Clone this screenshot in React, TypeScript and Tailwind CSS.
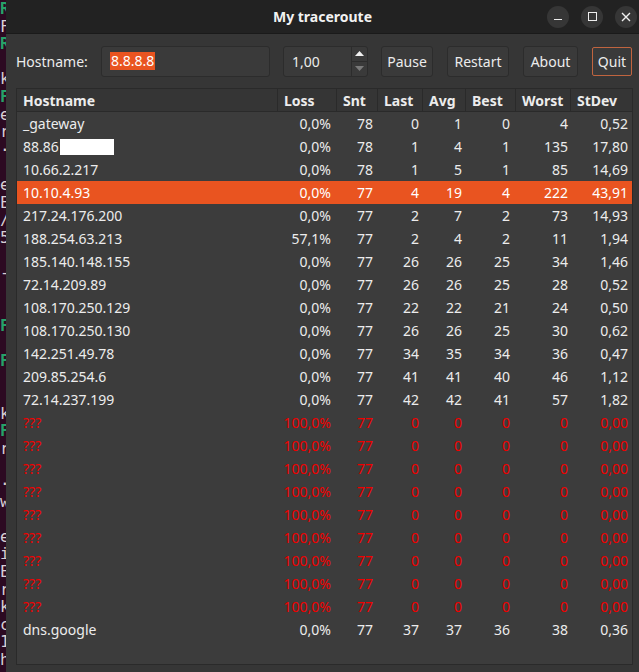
import React from "react";

type Row = { host: string; loss: string; snt: string; last: string; avg: string; best: string; worst: string; stdev: string; kind?: "sel" | "red"; mask?: boolean };

const rows: Row[] = [
  { host: "_gateway", loss: "0,0%", snt: "78", last: "0", avg: "1", best: "0", worst: "4", stdev: "0,52" },
  { host: "88.86", loss: "0,0%", snt: "78", last: "1", avg: "4", best: "1", worst: "135", stdev: "17,80", mask: true },
  { host: "10.66.2.217", loss: "0,0%", snt: "78", last: "1", avg: "5", best: "1", worst: "85", stdev: "14,69" },
  { host: "10.10.4.93", loss: "0,0%", snt: "77", last: "4", avg: "19", best: "4", worst: "222", stdev: "43,91", kind: "sel" },
  { host: "217.24.176.200", loss: "0,0%", snt: "77", last: "2", avg: "7", best: "2", worst: "73", stdev: "14,93" },
  { host: "188.254.63.213", loss: "57,1%", snt: "77", last: "2", avg: "4", best: "2", worst: "11", stdev: "1,94" },
  { host: "185.140.148.155", loss: "0,0%", snt: "77", last: "26", avg: "26", best: "25", worst: "34", stdev: "1,46" },
  { host: "72.14.209.89", loss: "0,0%", snt: "77", last: "26", avg: "26", best: "25", worst: "28", stdev: "0,52" },
  { host: "108.170.250.129", loss: "0,0%", snt: "77", last: "22", avg: "22", best: "21", worst: "24", stdev: "0,50" },
  { host: "108.170.250.130", loss: "0,0%", snt: "77", last: "26", avg: "26", best: "25", worst: "30", stdev: "0,62" },
  { host: "142.251.49.78", loss: "0,0%", snt: "77", last: "34", avg: "35", best: "34", worst: "36", stdev: "0,47" },
  { host: "209.85.254.6", loss: "0,0%", snt: "77", last: "41", avg: "41", best: "40", worst: "46", stdev: "1,12" },
  { host: "72.14.237.199", loss: "0,0%", snt: "77", last: "42", avg: "42", best: "41", worst: "57", stdev: "1,82" },
  ...Array.from({ length: 9 }, () => ({ host: "???", loss: "100,0%", snt: "77", last: "0", avg: "0", best: "0", worst: "0", stdev: "0,00", kind: "red" as const })),
  { host: "dns.google", loss: "0,0%", snt: "77", last: "37", avg: "37", best: "36", worst: "38", stdev: "0,36" },
];

const termLines: { c: string; g?: boolean }[] = [
  { c: "R", g: true }, { c: "F" }, { c: "R", g: true }, { c: "" }, { c: "k" }, { c: "F", g: true }, { c: "e" }, { c: "r" },
  { c: "·" }, { c: "" }, { c: "e" }, { c: "E" }, { c: "/" }, { c: "5" }, { c: "" }, { c: "-" }, { c: "" }, { c: "" }, { c: "F", g: true },
  { c: "" }, { c: "F", g: true }, { c: "" }, { c: "" }, { c: "k" }, { c: "F", g: true }, { c: "r" }, { c: "" }, { c: "·" }, { c: "w" },
  { c: "" }, { c: "e" }, { c: "i" }, { c: "E" }, { c: "r" }, { c: "k" }, { c: "c" }, { c: "1" }, { c: "h" },
];

const grid = "grid grid-cols-[261px_59px_41px_45px_43px_50px_55px_62px]";

export default function App() {
  const font = { fontFamily: '"Noto Sans", "DejaVu Sans", sans-serif' };
  return (
    <div className="flex w-[639px] h-[672px] overflow-hidden bg-[#2c0a22]" style={font}>
      <div className="w-[6px] shrink-0 overflow-hidden text-[16px] leading-[17.6px] text-[#d8d0d4]" style={{ fontFamily: '"DejaVu Sans Mono", monospace' }}>
        {termLines.map((l, i) => (
          <div key={i} className={l.g ? "text-[#26a269] font-bold" : ""}>{l.c || "\u00a0"}</div>
        ))}
      </div>
      <div className="flex-1 flex flex-col bg-[#363636] min-w-0">
        <div className="h-[34px] shrink-0 bg-[#222222] border-b border-[#1a1a1a] flex items-center relative">
          <div className="absolute left-0 right-0 text-center text-[14px] font-bold text-[#f2f2f2]">My traceroute</div>
          <div className="ml-auto mr-[2px] flex gap-[12px] items-center">
            <div className="w-[22px] h-[22px] rounded-full bg-[#363636] flex items-center justify-center">
              <div className="w-[8px] h-[1.5px] bg-[#eeeeee] mt-[6px]" />
            </div>
            <div className="w-[22px] h-[22px] rounded-full bg-[#363636] flex items-center justify-center">
              <div className="w-[9px] h-[9px] border-[1.5px] border-[#eeeeee]" />
            </div>
            <div className="w-[22px] h-[22px] rounded-full bg-[#363636] flex items-center justify-center">
              <svg width="10" height="10" viewBox="0 0 10 10"><path d="M1 1L9 9M9 1L1 9" stroke="#eeeeee" strokeWidth="1.4" /></svg>
            </div>
          </div>
        </div>
        <div className="flex items-center h-[32px] mt-[11px] ml-[10px] text-[14px] text-[#ececec]">
          <span className="w-[85px]">Hostname:</span>
          <div className="w-[169px] h-[31px] rounded-[3px] bg-[#3a3a3a] border border-[#2c2c2c] flex items-center pl-[8px]">
            <span className="bg-[#e95420] text-white px-[1px] leading-[18px]">8.8.8.8</span>
          </div>
          <div className="ml-[13px] w-[85px] h-[31px] rounded-[3px] bg-[#3a3a3a] border border-[#2c2c2c] flex">
            <div className="flex-1 flex items-center pl-[8px]">1,00</div>
            <div className="w-[16px] flex flex-col border-l border-[#2c2c2c]">
              <div className="flex-1 flex items-center justify-center border-b border-[#2c2c2c]">
                <svg width="9" height="5" viewBox="0 0 9 5"><path d="M0 5L4.5 0L9 5Z" fill="#f0f0f0" /></svg>
              </div>
              <div className="flex-1 flex items-center justify-center">
                <svg width="9" height="5" viewBox="0 0 9 5"><path d="M0 0L4.5 5L9 0Z" fill="#7a7a7a" /></svg>
              </div>
            </div>
          </div>
          <button className="ml-[13px] w-[52px] h-[31px] rounded-[3px] bg-[#3a3a3a] border border-[#2c2c2c] text-[#ececec]">Pause</button>
          <button className="ml-[14px] w-[62px] h-[31px] rounded-[3px] bg-[#3a3a3a] border border-[#2c2c2c] text-[#ececec]">Restart</button>
          <button className="ml-[14px] w-[55px] h-[31px] rounded-[3px] bg-[#3a3a3a] border border-[#2c2c2c] text-[#ececec]">About</button>
          <button className="ml-[14px] w-[40px] h-[29px] rounded-[2px] bg-[#3a3a3a] border border-[#c0643f] text-[#ececec]">Quit</button>
        </div>
        <div className="mt-[11px] ml-[10px] w-[617px] h-[577px] bg-[#3c3c3c] border border-[#2a2a2a] text-[14px] text-[#ececec]">
          <div className={`${grid} h-[23px] bg-[#353535] border-b border-[#2a2a2a] font-bold`}>
            {["Hostname", "Loss", "Snt", "Last", "Avg", "Best", "Worst", "StDev"].map((h, i) => (
              <div key={h} className={`pl-[6px] flex items-center ${i < 7 ? "border-r border-[#2a2a2a]" : ""}`}>{h}</div>
            ))}
          </div>
          {rows.map((r, i) => {
            const cls = r.kind === "sel" ? "bg-[#e95420] text-white" : r.kind === "red" ? "text-[#f00000]" : "";
            return (
              <div key={i} className={`${grid} h-[23px] items-center ${cls}`}>
                <div className="pl-[6px] flex items-center">
                  {r.host}
                  {r.mask && <span className="inline-block w-[54px] h-[16px] bg-white ml-[1px]" />}
                </div>
                <div className="text-right pr-[6px]">{r.loss}</div>
                <div className="text-right pr-[5px]">{r.snt}</div>
                <div className="text-right pr-[4px]">{r.last}</div>
                <div className="text-right pr-[4px]">{r.avg}</div>
                <div className="text-right pr-[6px]">{r.best}</div>
                <div className="text-right pr-[3px]">{r.worst}</div>
                <div className="text-right pr-[5px]">{r.stdev}</div>
              </div>
            );
          })}
        </div>
      </div>
    </div>
  );
}
